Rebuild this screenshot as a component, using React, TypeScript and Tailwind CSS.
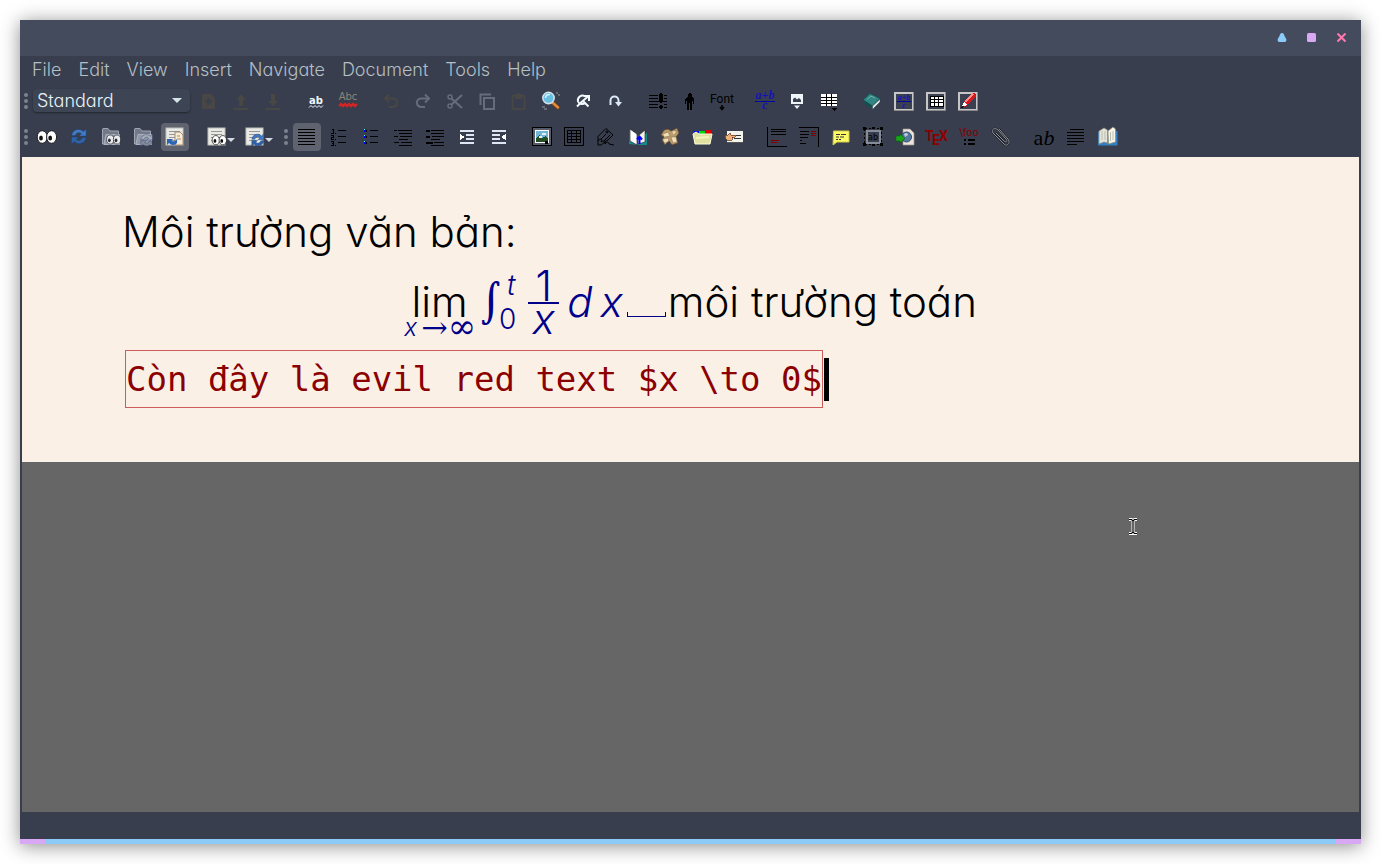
import React from "react";

type IconProps = { children: React.ReactNode; crisp?: boolean; w?: number };

function Icon({ children, crisp, w = 20 }: IconProps) {
  return (
    <svg
      width={w}
      height={20}
      viewBox={`0 0 ${w} 20`}
      fill="none"
      aria-hidden="true"
      shapeRendering={crisp ? "crispEdges" : "auto"}
      className="shrink-0 overflow-visible font-normal"
    >
      {children}
    </svg>
  );
}

type Tool = { name: string; icon: React.ReactNode; pressed?: boolean; disabled?: boolean; menu?: boolean };

const DIM = "#484745";
const GREY = "#666c7b";
const PALE = "#dfe6f2";
const RED = "#800000";

const Eyes = ({ x = 0, y = 0, s = 1 }: { x?: number; y?: number; s?: number }) => (
  <g transform={`translate(${x} ${y}) scale(${s})`}>
    <ellipse cx="5.2" cy="7" rx="5" ry="6.3" fill="#fff" stroke="#1c1c1c" strokeWidth="1" />
    <ellipse cx="14.6" cy="7" rx="5" ry="6.3" fill="#fff" stroke="#1c1c1c" strokeWidth="1" />
    <ellipse cx="4" cy="8" rx="1.9" ry="2.6" fill="#111" />
    <ellipse cx="13.2" cy="8" rx="1.9" ry="2.6" fill="#111" />
  </g>
);

const Refresh = ({ x = 0, y = 0, s = 1, c = "#4079c4", d = "#2f62a8" }: { x?: number; y?: number; s?: number; c?: string; d?: string }) => (
  <g transform={`translate(${x} ${y}) scale(${s})`}>
    <path d="M1 8C2 3.500 5 1.500 8.500 1.500 11 1.500 12.500 2.500 13.500 3.800L16.500 1V8.500H9L11.500 6C9 4 6 5 5 8Z" fill={c} stroke="#1e3f70" strokeWidth=".5" />
    <path d="M16.500 10C15.500 14.500 12.500 16.500 9 16.500 6.500 16.500 5 15.500 4 14.200L1 17V9.500H8.500L6 12C8.500 14 11.500 13 12.500 10Z" fill={d} stroke="#1e3f70" strokeWidth=".5" />
  </g>
);

const Page = () => (
  <g>
    <rect x="1" y="1" width="17" height="17" fill="#e9e9e6" stroke="#bfbfba" />
    <path d="M4 4.500H15M4 7.500H15M4 10.500H15M4 13.500H11" stroke="#989896" />
  </g>
);

const Folder = () => (
  <g>
    <path d="M2 1.500H7L9 4H17.500V8H6L3 17H1.500V2Z" fill="#737989" stroke="#a0a5b4" />
    <path d="M5 7.500H18.500V17.500H3Z" fill="#9297a8" stroke="#abb0be" />
  </g>
);

const Frame = ({ children }: { children: React.ReactNode }) => (
  <Icon crisp>
    <rect x="0" y="1" width="20" height="19" fill="#8a8a8a" />
    <rect x="0" y="1" width="19" height="18" fill="#c6c6c6" />
    <rect x="2" y="3" width="16" height="15" fill="#3a4050" />
    {children}
  </Icon>
);

const Fraction = ({ small }: { small?: boolean }) => (
  <g fontFamily="Liberation Serif, serif" fontStyle="italic" fontWeight="700" fill="#1414b4">
    <text x="10" y={small ? 9 : 8} fontSize={small ? 8 : 12} textAnchor="middle">a+b</text>
    <path d={small ? "M3 10.500H17" : "M0 10.500H20"} stroke="#0000a0" />
    <text x="10" y={small ? 17 : 18} fontSize={small ? 8 : 12} textAnchor="middle">c</text>
  </g>
);

const row1: Tool[][] = [
  [
    { name: "New document", disabled: true, icon: <Icon><path d="M3 4C3 3 4 3 4 3H12L16 7V17C16 18 15 18 15 18H4C3 18 3 17 3 17Z" fill={DIM} /><path d="M9.500 7V14M6 10.500H13" stroke="#383f4e" strokeWidth="2" /></Icon> },
    { name: "Open document", disabled: true, icon: <Icon><path d="M10 3L15 9H12V15H8V9H5Z" fill={DIM} /><path d="M2.500 18H17.500" stroke={DIM} strokeWidth="2" /></Icon> },
    { name: "Save document", disabled: true, icon: <Icon><path d="M10 15L15 10H12V3H8V10H5Z" fill={DIM} /><path d="M2.500 18H17.500" stroke={DIM} strokeWidth="2" /></Icon> },
  ],
  [
    { name: "Spellcheck", icon: <Icon><text x="10" y="13" textAnchor="middle" fontFamily="DejaVu Sans, sans-serif" fontWeight="700" fontSize="10" fill="#f1f7ff">ab</text><path d="M3 16.500L5 14.500L7 16.500L9 14.500L11 16.500L13 14.500L15 16.500L17 14.500" stroke="#f1f7ff" /></Icon> },
    { name: "Spellcheck continuously", icon: <Icon><text x="10" y="9" textAnchor="middle" fontFamily="DejaVu Sans, sans-serif" fontSize="10" fill="#8b8779">Abc</text><path d="M1 15L3 13L5 15L7 13L9 15L11 13L13 15L15 13L17 15L19 13" stroke="#d22525" strokeWidth="2.400" /></Icon> },
  ],
  [
    { name: "Undo", disabled: true, icon: <Icon><path d="M4 7.500H12C18 8 17.500 16 11 16H8" stroke={DIM} strokeWidth="2" /><path d="M8 3.500L4 7.500L8 11.500" stroke={DIM} strokeWidth="2" /></Icon> },
    { name: "Redo", disabled: true, icon: <Icon><path d="M16 7.500H8C2 8 2.500 16 9 16H12" stroke={GREY} strokeWidth="2" /><path d="M12 3.500L16 7.500L12 11.500" stroke={GREY} strokeWidth="2" /></Icon> },
    { name: "Cut", disabled: true, icon: <Icon><circle cx="5" cy="6" r="2" stroke={GREY} strokeWidth="1.500" /><circle cx="5" cy="15" r="2" stroke={GREY} strokeWidth="1.500" /><path d="M6.500 7.500L17 17M6.500 13.500L17 4" stroke={GREY} strokeWidth="2" /></Icon> },
    { name: "Copy", disabled: true, icon: <Icon><path d="M3.500 14V3.500H14" stroke={GREY} strokeWidth="2" /><rect x="7" y="7" width="10" height="11" stroke={GREY} strokeWidth="2" /></Icon> },
    { name: "Paste", disabled: true, icon: <Icon><rect x="3.500" y="5" width="12" height="13" stroke={DIM} strokeWidth="1.800" /><path d="M6 3H8L9.500 2L11 3H13V8H6Z" fill={DIM} /></Icon> },
    { name: "Find and replace", icon: <Icon><path d="M12 12L17 16.500" stroke="#6e3d12" strokeWidth="4" strokeLinecap="round" /><path d="M12 12L17 16.500" stroke="#e08a3c" strokeWidth="2.500" strokeLinecap="round" /><circle cx="7.500" cy="7" r="5.700" fill="#69bde0" stroke="#d4e4ea" strokeWidth="1.500" /><path d="M4.500 7C4.500 4.500 6.500 3 9 3.500" stroke="#d9f5ff" strokeWidth="1.500" /><path d="M15 2H17M17 4H19M1 16H4M3 18H6" stroke="#777b80" strokeWidth="1.500" /></Icon> },
    { name: "Find forward", icon: <Icon><path d="M12 5.500C9 3 4 6 5 10.500C6 13 10 14 12 12" stroke="#f4f8ff" strokeWidth="2" /><path d="M9.500 9.500L15.500 15.500M4 15.500L8 11.500L15 5.500M11 5H16V10" stroke="#f4f8ff" strokeWidth="2" /></Icon> },
    { name: "Navigate back", icon: <Icon><path d="M5.500 14V9.500C5.500 4 13.500 4 13.500 9.500V12" stroke="#dbe8f7" strokeWidth="2" /><path d="M10 11H17L13.500 15.500Z" fill="#dbe8f7" /></Icon> },
  ],
  [
    { name: "Paragraph layout", icon: <Icon crisp><path d="M1 4.500H10M1 7.500H10M1 10.500H19M1 13.500H10M1 16.500H10M16 4.500H19M16 7.500H19M16 13.500H19M16 16.500H19" stroke="#000" /><path d="M12 2H14V3H15V10H14V12H12V10H11V3H12ZM12 14H14V15H15V17H14V18H12V17H11V15H12Z" fill="#000" /></Icon> },
    { name: "Character style", icon: <Icon crisp><path d="M9 2H11V3H12V6H13L14 8V13H13V10H12V19H10V12H9V19H7V10H6V13H5V8L7 6H8V3H9Z" fill="#000" /></Icon> },
    { name: "Font", icon: <Icon w={24}><text x="12" y="12" textAnchor="middle" fontFamily="Roboto, sans-serif" fontSize="12" fill="#000">Font</text><path d="M12 14V18M10 16L12 18.500L14 16" stroke="#000" strokeWidth="1.500" /></Icon> },
  ],
  [
    { name: "Insert math", icon: <Icon><Fraction /></Icon> },
    { name: "Insert graphics", icon: <Icon><rect x="4" y="3" width="12" height="10" fill="#eef4f7" /><path d="M6 10V8L8 6.500L10 8.500L12 7L14 9V11H6Z" fill="#39404f" /><path d="M7 14.500H13L10 18Z" fill="#eef4f7" /></Icon> },
    { name: "Insert table", icon: <Icon crisp><rect x="2" y="3" width="16" height="12" fill="#fff" /><path d="M2 6.500H18M2 9.500H18M2 12.500H18M7.500 3V15M12.500 3V15" stroke="#000" /><path d="M13 17H18L15.500 20Z" fill="#000" /></Icon> },
  ],
  [
    { name: "Outline", icon: <Icon><path d="M1 9L8 2.500L18 7.500L10.500 15Z" fill="#2f8582" stroke="#164e50" strokeWidth=".7" /><path d="M1 9L10.500 15V18.500L2 12.500Z" fill="#174d4d" /><path d="M10.500 15L18 8V11L10.500 18.500Z" fill="#dce6e6" stroke="#233d42" strokeWidth=".5" /><path d="M5 8.500L9 5L13 7" stroke="#72b3ae" /></Icon> },
    { name: "Math toolbar", icon: <Frame><Fraction small /></Frame> },
    { name: "Table toolbar", icon: <Frame><rect x="4" y="5" width="13" height="10" fill="#fff" stroke="#000" /><path d="M4 8.500H17M4 11.500H17M8.500 5V15M12.500 5V15" stroke="#000" /></Frame> },
    { name: "Review toolbar", icon: <Frame><path d="M4 16L6 11L14 2H17L18 5L9 15Z" fill="#d51920" /><path d="M7 11L15 3" stroke="#ff8b84" strokeWidth="1.500" /><path d="M3 17L6 11L9 14Z" fill="#fff" /><path d="M3 17L5 14L6 16Z" fill="#111" /></Frame> },
  ],
];

const viewTools: Tool[] = [
  { name: "View", icon: <Icon><Eyes y={3} /></Icon> },
  { name: "Update", icon: <Icon><Refresh x={1.5} y={1} s={0.95} /></Icon> },
  { name: "View master document", icon: <Icon><Folder /><g opacity=".8"><Eyes x={5.500} y={7.500} s={0.72} /></g></Icon> },
  { name: "Update master document", icon: <Icon><Folder /><Refresh x={7} y={6.500} s={0.75} c="#a9adb8" d="#858a98" /></Icon> },
  { name: "Forward search", pressed: true, icon: <Icon><Page /><path d="M10 5H15L18 8V18H10Z" fill="#f6ecd7" stroke="#9b7753" strokeWidth=".8" /><path d="M12 9H15M12 12H16" stroke="#a98960" /><path d="M2 12H8L6.500 13.500C8 15 10 14.500 12 12V16C10 18.500 6 18.500 4 16L2 18Z" fill="#2b65b5" /></Icon> },
  { name: "View other formats", menu: true, icon: <Icon><Page /><Eyes x={5} y={8} s={0.74} /></Icon> },
  { name: "Update other formats", menu: true, icon: <Icon><Page /><Refresh x={6} y={6} s={0.78} /></Icon> },
];

const row2: Tool[][] = [
  [
    { name: "Default layout", pressed: true, icon: <Icon crisp><path d="M1 2.500H18M1 5.500H18M1 8.500H18M1 11.500H18M1 14.500H18M1 17.500H18" stroke="#000" /></Icon> },
    { name: "Numbered list", icon: <Icon crisp><path d="M9 3.500H17M9 9.500H17M9 15.500H17" stroke="#000" /><path d="M3 2.500H4.500V6M2 6.500H5M2 8.500H4.500V10.500H2.500V12.500H5M2 14.500H4.500V16.500H3M4.500 16V18.500H2M6 6.500H7M6 12.500H7M6 18.500H7" stroke="#000" /></Icon> },
    { name: "Itemized list", icon: <Icon crisp><path d="M9 3.500H17M9 9.500H17M9 15.500H17" stroke="#000" /><path d="M3 2H5V5H3ZM3 8H5V11H3ZM3 14H5V17H3Z" fill="#00f" /><path d="M3 2H4V3H3ZM3 8H4V9H3ZM3 14H4V15H3Z" fill="#5ff" /><path d="M5 3.500H6M5 9.500H6M5 15.500H6" stroke="#000" strokeWidth="2" /></Icon> },
    { name: "List", icon: <Icon crisp><path d="M1 3.500H4M5 3.500H19M6 6.500H19M1 9.500H5M7 9.500H19M6 12.500H15M1 15.500H6M8 15.500H19M6 18.500H19" stroke="#000" /></Icon> },
    { name: "Description", icon: <Icon crisp><path d="M6 3.500H19M6 6.500H19M7 9.500H19M6 12.500H15M9 15.500H19M6 18.500H19" stroke="#000" /><path d="M1 4H5M1 10H5M1 16H8" stroke="#000" strokeWidth="2" /></Icon> },
    { name: "Increase depth", icon: <Icon crisp><path d="M3 4H17M9 8H17M9 12H17M3 16H17" stroke={PALE} strokeWidth="2" /><path d="M3 7V13L8 10Z" fill="#fff" /></Icon> },
    { name: "Decrease depth", icon: <Icon crisp><path d="M3 4H17M3 8H11M3 12H11M3 16H17" stroke={PALE} strokeWidth="2" /><path d="M17 7V13L12 10Z" fill="#fff" /></Icon> },
  ],
  [
    { name: "Insert figure", icon: <Icon crisp><rect x=".5" y=".5" width="19" height="18" fill="#555b68" stroke="#000" /><rect x="3.500" y="3.500" width="13" height="12" fill="#71b6d6" stroke="#fff" /><path d="M4 15V11L7 8L10 11L14 9L16 12V15Z" fill="#244d23" /><path d="M7 9H10V11H7ZM10 6H14V8H10Z" fill="#e9f1ed" /><path d="M13 14H16V17H13Z" fill="#000" /></Icon> },
    { name: "Insert table float", icon: <Icon crisp><rect x=".5" y=".5" width="19" height="18" stroke="#000" /><rect x="3.500" y="3.500" width="13" height="12" stroke="#000" /><path d="M3 6.500H17M3 9.500H17M3 12.500H17M7.500 3V16M12.500 3V16" stroke="#000" /></Icon> },
    { name: "Insert label", icon: <Icon><path d="M2 18V9.500L10 1.500L17 8L13 12M2 18H5L13 12M5 12L10 7M8 14L14 8M2 14C4 11 7 12 5 15C8 13 10 14 9 17C11 14 13 15 13 17L18 18" stroke="#000" /><circle cx="11" cy="5" r="1" stroke="#000" /></Icon> },
    { name: "Insert cross-reference", icon: <Icon><path d="M1 2V17L10 18H19V6L11 9Z" fill="#138d8c" /><path d="M2 2L9 7V18L2 14Z" fill="#fff" stroke="#111" strokeWidth=".6" /><path d="M10 9L17 3V15L10 17Z" fill="#f5f3e7" stroke="#222" strokeWidth=".6" /><path d="M11.500 17V10M9 12.500L11.500 9.500L14 12.500" stroke="#00f" strokeWidth="2" /></Icon> },
    { name: "Insert citation", icon: <Icon><path d="M4 3L8 2L11 4L17 1L19 6L16 10L18 16L12 18L9 14L5 18L2 13L4 10L1 8Z" fill="#b89a6c" stroke="#57452e" strokeWidth=".7" /><path d="M3 7L8 5L10 9L5 10M12 4L17 4L14 8M3 12L8 11L9 14L5 16M11 10L16 10L17 15L13 16Z" fill="#f1dfb9" stroke="#84684a" strokeWidth=".5" /></Icon> },
    { name: "Insert index entry", icon: <Icon><path d="M2 4H7V7H2Z" fill="#00f" /><path d="M7 4H13V7H7Z" fill="#00d800" /><path d="M13 3H19V7H13Z" fill="#e10000" /><path d="M1 7L4 5L7 7H20L18 17H3Z" fill="#e0e1a0" stroke="#fbfbd8" /><path d="M4 11L17 10" stroke="#f4f4bd" strokeWidth="2" /></Icon> },
    { name: "Insert nomenclature entry", icon: <Icon crisp><rect x="3" y="4" width="16" height="11" fill="#f4f2ed" /><path d="M3 15.500H19" stroke="#555" /><path d="M1 8H4L6 6L7 8H11V10H8V13H3L1 11Z" fill="#eeb17a" stroke="#684222" strokeWidth=".8" /><path d="M12 8.500H17M10 11.500H17" stroke="#333" /></Icon> },
  ],
  [
    { name: "Insert footnote", icon: <Icon crisp><path d="M.5 0V19.500H20M4 2.500H19M4 4.500H19M4 7.500H19" stroke="#000" /><path d="M4 13.500H12M4 15.500H10" stroke={RED} /></Icon> },
    { name: "Insert margin note", icon: <Icon crisp><path d="M0 .5H19.500V20M1 4.500H10M1 7.500H10M1 10.500H9M1 13.500H3M1 16.500H7" stroke="#000" /><path d="M12 4.500H17M12 6.500H17M12 8.500H17" stroke={RED} /></Icon> },
    { name: "Insert note", icon: <Icon><path d="M2.500 4H18V15H6L2 18Z" fill="#fffb66" stroke="#cfc94a" /><path d="M5 7.500H9M10 7.500H15M5 10H8M9 10H13M5 12.500H7M8 12.500H10" stroke="#333" /></Icon> },
    { name: "Insert box", icon: <Icon crisp><rect x="3.500" y="3.500" width="13" height="12" stroke="#858b97" strokeWidth="2" /><rect x="1.500" y="1.500" width="17" height="16" stroke="#000" strokeDasharray="2 2" /><path d="M0 0H3V3H0ZM17 0H20V3H17ZM0 16H3V19H0ZM17 16H20V19H17ZM9 0H12V2H9ZM9 17H12V19H9Z" fill="#000" /><text x="10" y="13" textAnchor="middle" fontFamily="DejaVu Sans, sans-serif" fontSize="8" fill="#000">ab</text></Icon> },
    { name: "Insert hyperlink", icon: <Icon><path d="M8 2H15L19 6V18H8Z" fill="#ece4da" stroke="#9d948c" strokeWidth=".7" /><circle cx="11.500" cy="10" r="5" fill="#55789d" stroke="#27496e" /><path d="M9 7C11 5 13 6 13 8L10 10Z" fill="#b8cbd7" /><path d="M1 9H5V7L10 11.500L5 16V14H1Z" fill="#1ba51b" stroke="#0b590e" strokeWidth=".6" /></Icon> },
    { name: "Insert TeX code", icon: <Icon><g fontFamily="Roboto, sans-serif" fontWeight="700" fontSize="14" fill="#8b0000"><text x="-2" y="14">T</text><text x="5" y="18">E</text><text x="12" y="14">X</text></g></Icon> },
    { name: "Insert math macro", icon: <Icon w={22}><text x="11" y="9" textAnchor="middle" fontFamily="DejaVu Sans, sans-serif" fontSize="10" fill={RED}>\foo</text><path d="M6 12H8V14H6ZM6 16H8V18H6ZM10 12H17V14H10ZM10 16H17V18H10Z" fill="#000" /></Icon> },
    { name: "Include file", icon: <Icon><g strokeLinecap="round"><path d="M8 2L17 12C20 16 16 20 13 17L2 6C0 2 4 0 7 3L15 12C17 14 15 16 13 14L5 6" stroke="#20242c" strokeWidth="2" /><path d="M8 2L17 12C20 16 16 20 13 17L2 6C0 2 4 0 7 3L15 12C17 14 15 16 13 14L5 6" stroke="#8f9297" strokeWidth="1" /></g></Icon> },
  ],
  [
    { name: "Text style", icon: <Icon w={22}><text x="11" y="18" textAnchor="middle" fontFamily="Liberation Serif, serif" fontSize="22" fill="#000">a<tspan fontStyle="italic">b</tspan></text></Icon> },
    { name: "Paragraph settings", icon: <Icon crisp><path d="M4 2.500H18M1 5.500H18M1 8.500H18M1 11.500H18M1 14.500H18M1 17.500H11" stroke="#000" /></Icon> },
    { name: "Thesaurus", icon: <Icon><path d="M0 5V18.500H19.500V4Z" fill="#3480c4" /><path d="M1 4L6 1L9.500 3V16L6 15L1 17Z" fill="#e4e4dc" stroke="#8e8a78" strokeWidth=".7" /><path d="M10 4L15 0L17.500 2V15L10.500 17Z" fill="#f8f5e8" stroke="#8e8a78" strokeWidth=".7" /><path d="M4 4V13M7 4V13M12.500 5V14M15 4V13" stroke="#bdbcae" /></Icon> },
  ],
];

function ToolButton({ tool }: { tool: Tool }) {
  return (
    <button
      type="button"
      aria-label={tool.name}
      aria-pressed={tool.pressed}
      disabled={tool.disabled}
      className={`flex h-7 shrink-0 items-center justify-center rounded ${tool.menu ? "w-[34px]" : "w-7"} ${tool.pressed ? "bg-[#5f636f]" : ""}`}
    >
      {tool.icon}
      {tool.menu && (
        <svg width="8" height="20" viewBox="0 0 8 20" aria-hidden="true"><path d="M0 11H8L4 15Z" fill="#d3dae3" /></svg>
      )}
    </button>
  );
}

function Group({ tools }: { tools: Tool[] }) {
  return (
    <div className="flex gap-1">
      {tools.map((t) => <ToolButton key={t.name} tool={t} />)}
    </div>
  );
}

function Handle() {
  return (
    <svg width="4" height="16" viewBox="0 0 4 16" fill="#7d838e" aria-hidden="true" className="shrink-0">
      <circle cx="2" cy="2" r="2" /><circle cx="2" cy="8" r="2" /><circle cx="2" cy="14" r="2" />
    </svg>
  );
}

const menus = ["File", "Edit", "View", "Insert", "Navigate", "Document", "Tools", "Help"];

export default function App() {
  return (
    <div className="flex min-h-screen bg-white p-5 font-['Inter',sans-serif] font-light [font-feature-settings:'cv11']">
      <div className="flex min-w-0 flex-1 flex-col bg-[#383e4d] shadow-[0_2px_18px_rgba(0,0,0,0.45)]">
        <header className="flex h-9 items-center justify-end gap-5 bg-[#444b5d] pr-[14px]">
          <button type="button" aria-label="Minimize" className="size-[10px]">
            <svg width="10" height="10" viewBox="0 0 10 10"><path d="M5 0C7 0 7 2 8 4C9 5 10 7 9 8.500C8.500 9 7 9 5 9S1.500 9 1 8.500C0 7 1 5 2 4C3 2 3 0 5 0Z" fill="#8ccaf7" /></svg>
          </button>
          <button type="button" aria-label="Maximize" className="size-[10px]">
            <svg width="10" height="10" viewBox="0 0 10 10"><rect width="9" height="9" rx="1.500" fill="#d9a8f4" /></svg>
          </button>
          <button type="button" aria-label="Close" className="size-[10px]">
            <svg width="10" height="10" viewBox="0 0 10 10"><path d="M.5 .5L8.500 8.500M8.500 .5L.5 8.500" stroke="#ff79b0" strokeWidth="2" /></svg>
          </button>
        </header>

        <nav className="flex h-[26px] items-center gap-[17px] pl-3 pt-[2px] text-[18px] leading-6 text-[#b4bfc6]">
          {menus.map((m) => <button key={m} type="button">{m}</button>)}
        </nav>

        <div className="flex h-[37px] items-center pl-1">
          <Handle />
          <div className="relative ml-[5px] mr-[5px] w-[157px] shrink-0">
            <select aria-label="Paragraph style" className="h-[23px] w-full appearance-none rounded bg-[#3d4454] pl-1 text-[18px] leading-5 text-[#e8f3f8] shadow-[0_1px_2px_rgba(0,0,0,0.4)]">
              <option>Standard</option>
            </select>
            <svg width="10" height="6" viewBox="0 0 10 6" aria-hidden="true" className="pointer-events-none absolute right-2 top-[9px]"><path d="M0 0H10L5 5Z" fill="#d3e3e8" /></svg>
          </div>
          <div className="flex gap-[15px]">
            {row1.map((g, i) => <Group key={i} tools={g} />)}
          </div>
        </div>

        <div className="flex h-[38px] items-center pb-[2px] pl-1">
          <Handle />
          <div className="ml-[5px] flex gap-[15px]">
            <Group tools={viewTools.slice(0, 5)} />
            <Group tools={viewTools.slice(5)} />
          </div>
          <div className="ml-2 mr-[5px] flex"><Handle /></div>
          <div className="flex gap-[15px]">
            {row2.map((g, i) => <Group key={i} tools={g} />)}
          </div>
        </div>

        <main className="mx-[2px] flex flex-1 flex-col bg-[#666666]">
          <article className="bg-[#fbf0e5] pb-[54px] pt-[51px] text-[42px] leading-[48px] text-black">
            <p className="pl-[100px]">Môi trường văn bản:</p>

            <div className="mt-3 flex h-[68px] items-center justify-center whitespace-nowrap text-[#00008b]">
              <span className="flex flex-col items-center pt-4">
                <span className="leading-9 text-black">lim</span>
                <span className="flex text-[28px] leading-4">
                  <i className="mr-1 text-2xl leading-4">x</i>
                  <span className="font-['DejaVu_Math_TeX_Gyre','Liberation_Serif',serif]">→</span>
                  <span className="font-['DejaVu_Math_TeX_Gyre','Liberation_Serif',serif] text-[34px] leading-4">∞</span>
                </span>
              </span>
              <span className="ml-1 font-['DejaVu_Math_TeX_Gyre','Liberation_Serif',serif] text-[40px]">∫</span>
              <span className="-ml-1 flex flex-col gap-[6px] text-[28px] leading-7">
                <i className="pl-2">t</i>
                <span>0</span>
              </span>
              <span className="ml-3 flex w-[31px] flex-col items-center">
                <span className="leading-8">1</span>
                <span className="h-[2px] w-full bg-[#00008b]" />
                <i className="leading-[30px]">x</i>
              </span>
              <i className="ml-2">d</i>
              <i className="ml-2">x</i>
              <span className="ml-1 mr-[2px] mt-6 h-[5px] w-[39px] border-x border-b border-[#00008b]" />
              <span className="text-black">môi trường toán</span>
            </div>

            <div className="mt-[14px] flex items-center pl-[103px]">
              <code className="h-[58px] whitespace-pre border border-[#cd5c5c] font-['DejaVu_Sans_Mono',monospace] text-[34px] font-normal leading-[56px] text-[#8b0000]">{"Còn đây là evil red text $x \\to 0$"}</code>
              <span className="ml-px h-[43px] w-[5px] bg-black" />
            </div>
          </article>

          <div className="relative flex-1">
            <svg width="10" height="17" viewBox="0 0 10 17" aria-hidden="true" className="absolute left-[82.7%] top-14">
              <path d="M1 1.500H3.500L5 3L6.500 1.500H9M5 3V14M1 15.500H3.500L5 14L6.500 15.500H9" fill="none" stroke="#fff" strokeWidth="3" />
              <path d="M1 1.500H3.500L5 3L6.500 1.500H9M5 3V14M1 15.500H3.500L5 14L6.500 15.500H9" fill="none" stroke="#000" strokeWidth="1.200" />
            </svg>
          </div>
        </main>

        <footer>
          <div className="h-[27px]" />
          <div className="flex h-[5px] bg-[#8ccaf7]">
            <span className="w-[25px] bg-[#d9a8f4]" />
            <span className="flex-1" />
            <span className="w-[25px] bg-[#d9a8f4]" />
          </div>
        </footer>
      </div>
    </div>
  );
}
